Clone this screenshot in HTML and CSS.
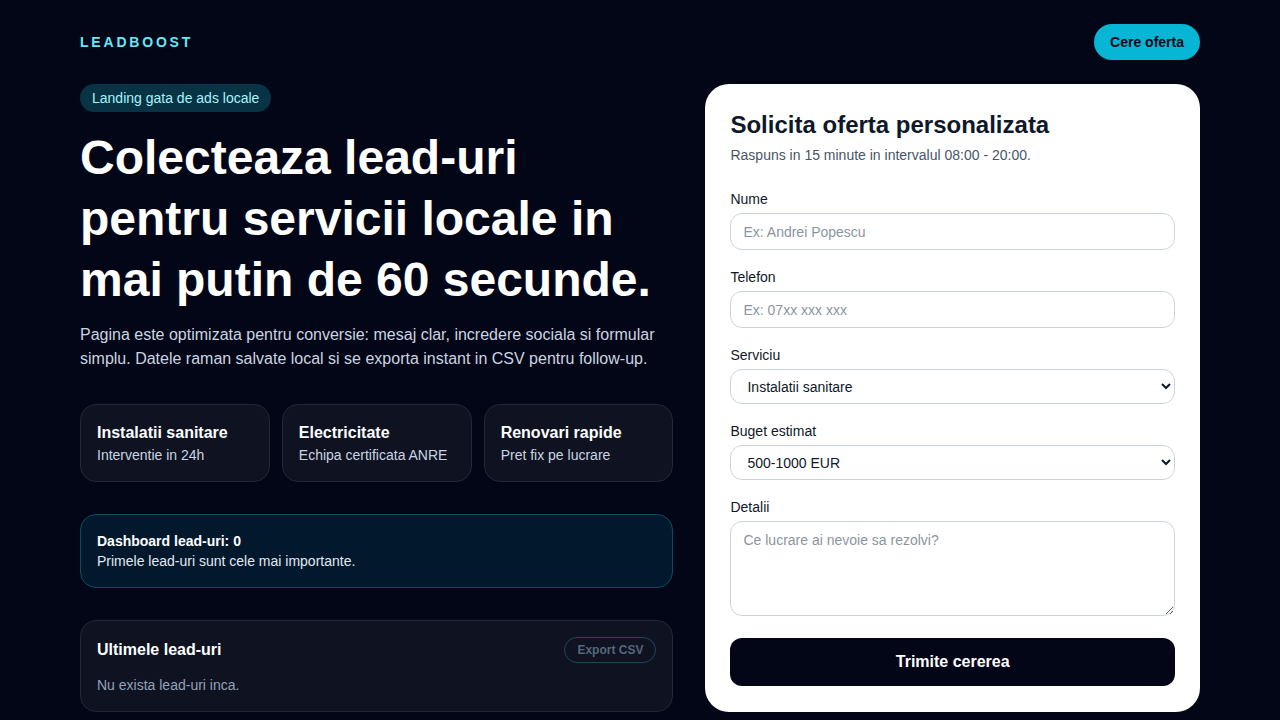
FILE: index.html
```html
<!DOCTYPE html>
<html lang="ro">
    <head>
        <meta charset="utf-8">
        <title>LeadBoost - Servicii locale</title>
        <link rel="stylesheet" href="styles.css">
    </head>
    <body>
        <div class="page">
            <header class="topbar">
                <span class="logo">LEADBOOST</span>
                <a href="#oferta" class="btnCta">Cere oferta</a>
            </header>

            <main class="layout">
                <section class="hero">
                    <span class="badge">Landing gata de ads locale</span>
                    <h1>Colecteaza lead-uri pentru servicii locale in mai putin de 60 secunde.</h1>
                    <p class="lead">Pagina este optimizata pentru conversie: mesaj clar, incredere sociala si formular simplu. Datele raman salvate local si se exporta instant in CSV pentru follow-up.</p>

                    <div class="features">
                        <div class="feature">
                            <strong>Instalatii sanitare</strong>
                            <span>Interventie in 24h</span>
                        </div>
                        <div class="feature">
                            <strong>Electricitate</strong>
                            <span>Echipa certificata ANRE</span>
                        </div>
                        <div class="feature">
                            <strong>Renovari rapide</strong>
                            <span>Pret fix pe lucrare</span>
                        </div>
                    </div>

                    <div class="stats">
                        <div class="statsTitle">Dashboard lead-uri: <span id="leadCount">0</span></div>
                        <div class="statsText">Primele lead-uri sunt cele mai importante.</div>
                    </div>

                    <div class="leads">
                        <div class="leadsHead">
                            <h3>Ultimele lead-uri</h3>
                            <button type="button" class="btnExport" disabled>Export CSV</button>
                        </div>
                        <p class="empty">Nu exista lead-uri inca.</p>
                    </div>
                </section>

                <section class="formCard" id="oferta">
                    <h2>Solicita oferta personalizata</h2>
                    <p class="hint">Raspuns in 15 minute in intervalul 08:00 - 20:00.</p>

                    <form class="leadForm">
                        <div class="field">
                            <label for="nume">Nume</label>
                            <input type="text" id="nume" placeholder="Ex: Andrei Popescu">
                        </div>
                        <div class="field">
                            <label for="telefon">Telefon</label>
                            <input type="text" id="telefon" placeholder="Ex: 07xx xxx xxx">
                        </div>
                        <div class="field">
                            <label for="serviciu">Serviciu</label>
                            <select id="serviciu">
                                <option>Instalatii sanitare</option>
                                <option>Electricitate</option>
                                <option>Renovari rapide</option>
                            </select>
                        </div>
                        <div class="field">
                            <label for="buget">Buget estimat</label>
                            <select id="buget">
                                <option>500-1000 EUR</option>
                                <option>sub 500 EUR</option>
                                <option>peste 1000 EUR</option>
                            </select>
                        </div>
                        <div class="field">
                            <label for="detalii">Detalii</label>
                            <textarea id="detalii" placeholder="Ce lucrare ai nevoie sa rezolvi?"></textarea>
                        </div>
                        <button type="submit" class="btnSubmit">Trimite cererea</button>
                    </form>
                </section>
            </main>
        </div>
    </body>
</html>
```

FILE: styles.css
```css
* {
    box-sizing: border-box;
}
body {
    margin: 0;
    background: #020617;
    color: #f8fafc;
    font-family: "Liberation Sans", Arial, sans-serif;
}
.page {
    max-width: 1120px;
    margin: 0 auto;
    padding: 24px 0 8px;
}

/* top bar */
.topbar {
    display: flex;
    align-items: center;
    justify-content: space-between;
    height: 36px;
    margin-bottom: 24px;
}
.logo {
    font-size: 14px;
    font-weight: bold;
    letter-spacing: 0.2em;
    color: #67e8f9;
}
.btnCta {
    display: inline-block;
    padding: 8px 16px;
    line-height: 20px;
    font-size: 14px;
    font-weight: bold;
    color: #020617;
    background: #06b6d4;
    border-radius: 999px;
    text-decoration: none;
}

.layout {
    display: grid;
    grid-template-columns: 1.2fr 1fr;
    gap: 32px;
    align-items: start;
}

/* left column */
.badge {
    display: inline-block;
    padding: 4px 12px;
    line-height: 20px;
    font-size: 14px;
    color: #a5f3fc;
    background: #083344;
    border-radius: 999px;
}
h1 {
    margin: 15px 0 13px;
    font-size: 48px;
    line-height: 61px;
    font-weight: bold;
    color: #ffffff;
}
.lead {
    margin: 0 0 33px;
    font-size: 16px;
    line-height: 24px;
    color: #cbd5e1;
}
.features {
    display: grid;
    grid-template-columns: repeat(3, 1fr);
    gap: 12px;
    margin-bottom: 32px;
}
.feature, .leads {
    background: #0e1221;
    border: 1px solid #232838;
    border-radius: 16px;
    padding: 16px;
}
.feature strong {
    display: block;
    font-size: 16px;
    line-height: 24px;
    color: #ffffff;
}
.feature span {
    display: block;
    font-size: 14px;
    line-height: 20px;
    color: #cbd5e1;
}
.stats {
    background: #02192d;
    border: 1px solid #0e4a5f;
    border-radius: 16px;
    padding: 16px;
    margin-bottom: 32px;
    font-size: 14px;
    line-height: 20px;
}
.statsTitle {
    font-weight: bold;
    color: #ffffff;
}
.statsText {
    color: #e2e8f0;
}
.leadsHead {
    display: flex;
    align-items: center;
    justify-content: space-between;
}
.leadsHead h3 {
    margin: 0;
    font-size: 16px;
    color: #ffffff;
}
.btnExport {
    padding: 4px 12px;
    line-height: 16px;
    font-family: inherit;
    font-size: 12px;
    font-weight: bold;
    color: #56687a;
    background: transparent;
    border: 1px solid #1b4a5a;
    border-radius: 999px;
}
.empty {
    margin: 12px 0 0;
    font-size: 14px;
    line-height: 20px;
    color: #94a3b8;
}

/* form card */
.formCard {
    background: #ffffff;
    color: #0f172a;
    border-radius: 24px;
    padding: 26px 25px 26px;
}
.formCard h2 {
    margin: 0 0 6px;
    font-size: 24px;
    line-height: 29px;
}
.hint {
    margin: 0 0 24px;
    font-size: 14px;
    line-height: 20px;
    color: #475569;
}
.leadForm {
    display: flex;
    flex-direction: column;
    gap: 17px;
}
.field label {
    display: block;
    margin-bottom: 4px;
    font-size: 14px;
    line-height: 20px;
    color: #111827;
}
.field input, .field select, .field textarea {
    display: block;
    width: 100%;
    font-family: inherit;
    font-size: 14px;
    color: #0f172a;
    background: #ffffff;
    border: 1px solid #cbd5e1;
    border-radius: 12px;
}
.field input {
    height: 37px;
    padding: 0 12px;
}
.field select {
    height: 35px;
    padding: 0 8px 0 12px;
}
.field textarea {
    height: 95px;
    padding: 10px 12px;
    resize: vertical;
}
::placeholder {
    color: #8b95a1;
}
.btnSubmit {
    margin-top: 5px;
    height: 48px;
    font-family: inherit;
    font-size: 16px;
    font-weight: bold;
    color: #ffffff;
    background: #020617;
    border: none;
    border-radius: 12px;
}
```
